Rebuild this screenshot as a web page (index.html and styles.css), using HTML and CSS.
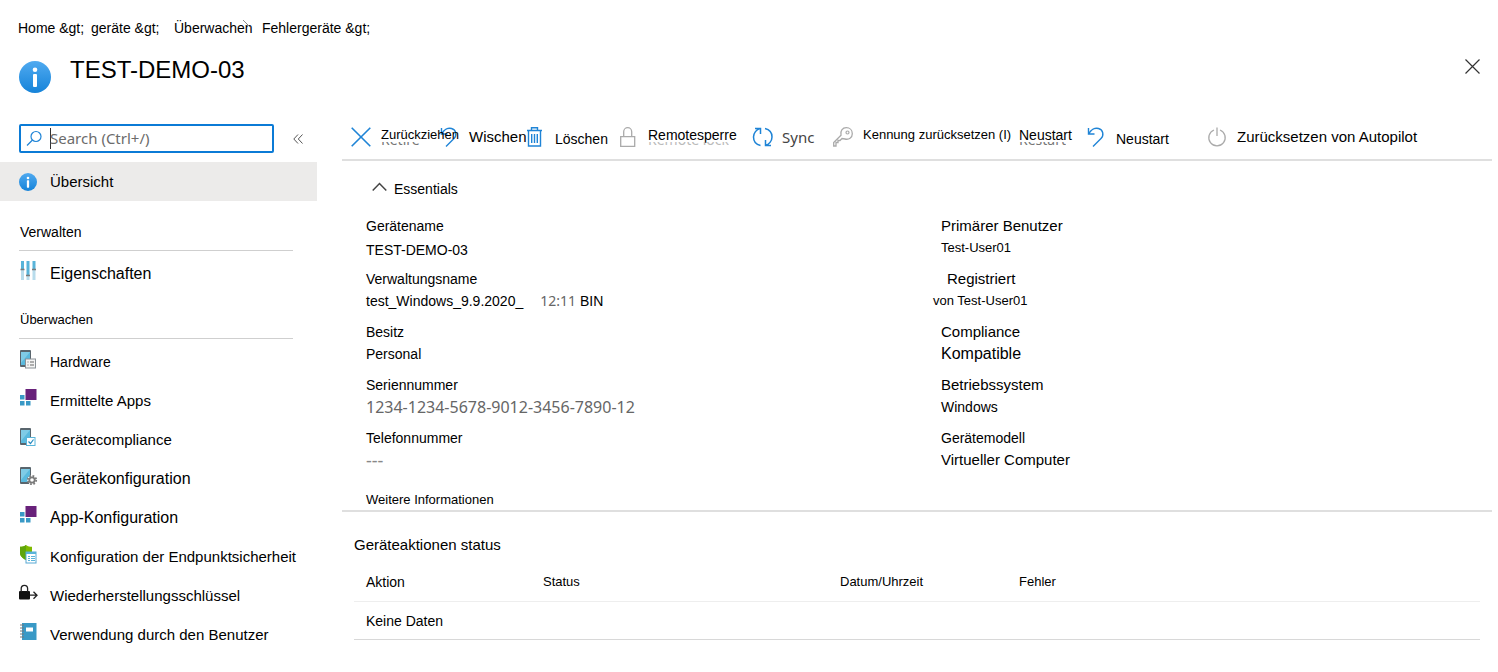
FILE: index.html
```html
<!DOCTYPE html>
<html lang="de">
<head>
<meta charset="utf-8">
<meta name="viewport" content="width=device-width, initial-scale=1">
<title>TEST-DEMO-03</title>
<link rel="stylesheet" href="styles.css">
</head>
<body>
<svg class="defs" width="0" height="0" aria-hidden="true">
  <defs>
    <linearGradient id="blue" x1="0" y1="0" x2="0" y2="1"><stop offset="0" stop-color="#50aaf0"/><stop offset="1" stop-color="#1583d9"/></linearGradient>
    <symbol id="info" viewBox="0 0 32 32"><circle cx="16" cy="16" r="16" fill="url(#blue)"/><circle cx="16" cy="8.800" r="2.300" fill="#fff"/><rect x="14" y="13" width="4" height="13" rx="1" fill="#fff"/></symbol>
    <symbol id="undo" viewBox="0 0 20 20"><path d="M1.500 1v6h6M1.800 6.800C4 2.500 8 .600 11.500 1.500c5 1.300 5.500 7 2.500 10L6 19.500" fill="none" stroke="#1f84d6" stroke-width="1.400"/></symbol>
    <symbol id="phone" viewBox="0 0 18 18"><rect x="1" y="0" width="11" height="17" rx="1" fill="#59656d"/><rect x="2" y="2" width="9" height="13" fill="#5ab9dd"/><path d="M2 2h9L2 13z" fill="#7fcbe6"/></symbol>
    <symbol id="apps" viewBox="0 0 18 18"><rect x="6.500" y="0" width="11" height="11" fill="#68217a"/><rect x="1" y="6" width="4.500" height="4.500" fill="#3999c6"/><rect x="1" y="12" width="4.500" height="4.500" fill="#3999c6"/><rect x="7" y="12" width="4.500" height="4.500" fill="#3999c6"/></symbol>
  </defs>
</svg>

<header class="header">
  <nav class="crumbs" aria-label="Breadcrumb">
    <a href="#">Home &amp;gt;</a>
    <a href="#">geräte &amp;gt;</a>
    <a class="crumb-current" href="#">Überwachen<svg class="crumb-mark" width="8" height="8" viewBox="0 0 8 8"><path d="M0 0l7 7" stroke="#888" fill="none"/></svg></a>
    <a href="#">Fehlergeräte &amp;gt;</a>
  </nav>
  <div class="title-row">
    <svg class="title-icon" width="32" height="32"><use href="#info"/></svg>
    <h1>TEST-DEMO-03</h1>
    <button class="close" type="button" aria-label="Schließen"><svg width="15" height="15" viewBox="0 0 15 15"><path d="M.500 .500l14 14M14.500 .500l-14 14" stroke="#333" stroke-width="1.200"/></svg></button>
  </div>
</header>

<div class="layout">
  <aside class="sidebar">
    <div class="search-row">
      <div class="search">
        <svg width="17" height="17" viewBox="0 0 17 17"><circle cx="10" cy="6.500" r="5" fill="none" stroke="#1f84d6" stroke-width="1.200"/><path d="M6.500 10L1 15.500" stroke="#1f84d6" stroke-width="1.300"/></svg>
        <span class="caret"></span>
        <input type="text" aria-label="Search" placeholder="Search (Ctrl+/)">
      </div>
      <button class="collapse" type="button" aria-label="Menü einklappen"><svg width="10" height="10" viewBox="0 0 10 10"><path d="M5 .500L.800 5 5 9.500M9.500 .500L5.300 5l4.200 4.500" fill="none" stroke="#555"/></svg></button>
    </div>
    <nav>
      <a class="item selected" href="#"><svg width="18" height="18"><use href="#info"/></svg><span>Übersicht</span></a>
      <h2 class="group wide">Verwalten</h2>
      <ul class="items">
        <li><a class="item large" href="#"><svg width="18" height="20" viewBox="0 0 18 20"><path d="M3.500 0v9M9 0v14M15 0v9" stroke="#59b4d9" stroke-width="3"/><path d="M3.500 9v10M9 14v5M15 9v10" stroke="#b8dcec" stroke-width="3"/><path d="M1.500 8.500h4M7 14.500h4M13 8.500h4" stroke="#7a7a7a" stroke-width="1.500"/></svg><span>Eigenschaften</span></a></li>
      </ul>
      <h2 class="group">Überwachen</h2>
      <ul class="items">
        <li><a class="item small" href="#"><svg width="18" height="18" viewBox="0 0 18 18"><use href="#phone"/><rect x="6.500" y="9" width="10" height="9" fill="#f4f4f4" stroke="#8b9297"/><path d="M8.500 12h1M8.500 15h1M11 12h4M11 15h4" stroke="#666"/></svg><span>Hardware</span></a></li>
        <li><a class="item" href="#"><svg width="18" height="18"><use href="#apps"/></svg><span>Ermittelte Apps</span></a></li>
        <li><a class="item" href="#"><svg width="18" height="18" viewBox="0 0 18 18"><use href="#phone"/><rect x="7.500" y="9.500" width="8.500" height="8" fill="#fff" stroke="#59b4d9"/><path d="M9.500 13.500l2 2 3-4" fill="none" stroke="#258bc0" stroke-width="1.200"/></svg><span>Gerätecompliance</span></a></li>
        <li><a class="item large" href="#"><svg width="18" height="18" viewBox="0 0 18 18"><use href="#phone"/><circle cx="13" cy="13" r="4.200" fill="#fff" stroke="#fff"/><circle cx="13" cy="13" r="4.200" fill="none" stroke="#7a7a7a" stroke-width="1.800" stroke-dasharray="1.800 1.500"/><circle cx="13" cy="13" r="2.700" fill="#fff" stroke="#7a7a7a" stroke-width="1.800"/></svg><span>Gerätekonfiguration</span></a></li>
        <li><a class="item large" href="#"><svg width="18" height="18"><use href="#apps"/></svg><span>App-Konfiguration</span></a></li>
        <li><a class="item" href="#"><svg width="18" height="18" viewBox="0 0 18 18"><path d="M7 0c2 1.500 4 1.800 6 1.800V8c0 3-3 5.500-6 7-3-1.500-6-4-6-7V1.800C3 1.800 5 1.500 7 0z" fill="#7fba00"/><path d="M7 0v15c-3-1.500-6-4-6-7V1.800C3 1.800 5 1.500 7 0z" fill="#5fa50b"/><rect x="7" y="7" width="10" height="11" fill="#fff" stroke="#59a9d4"/><path d="M7 8h10" stroke="#59b4d9" stroke-width="2"/><path d="M9 11.500h2M12 11.500h4M9 13.500h2M12 13.500h4M9 15.500h2M12 15.500h4" stroke="#59b4d9"/></svg><span>Konfiguration der Endpunktsicherheit</span></a></li>
        <li><a class="item" href="#"><svg width="19" height="18" viewBox="0 0 19 18"><rect x="0" y="7" width="11" height="8.500" rx="1" fill="#111"/><path d="M2.200 8V4.500a3.200 3.200 0 0 1 6.400 0V8" fill="none" stroke="#222" stroke-width="1.300"/><path d="M11 11.200h7M14.500 7.700L18 11.200l-3.500 3.500" fill="none" stroke="#222" stroke-width="1.300"/></svg><span>Wiederherstellungsschlüssel</span></a></li>
        <li><a class="item" href="#"><svg width="18" height="18" viewBox="0 0 18 18"><rect x="3" y="0" width="14.500" height="17" fill="#3999c6"/><rect x="7" y="4.500" width="7" height="4" fill="#fff"/><path d="M1 2h4M1 5h4M1 8h4M1 11h4M1 14h4" stroke="#777"/></svg><span>Verwendung durch den Benutzer</span></a></li>
      </ul>
    </nav>
  </aside>

  <main class="main">
    <div class="toolbar" role="toolbar" aria-label="Geräteaktionen">
      <button class="tool small raised" type="button"><svg width="20" height="20" viewBox="0 0 20 20"><path d="M.700 .700l18.600 18.600M19.300 .700L.700 19.300" stroke="#1f84d6" stroke-width="1.600"/></svg><span class="label">Zurückziehen<span class="ghost" aria-hidden="true"><span>Retire</span></span></span></button>
      <button class="tool large" type="button"><svg width="20" height="20"><use href="#undo"/></svg><span class="label">Wischen</span></button>
      <button class="tool lowered" type="button"><svg width="20" height="20" viewBox="0 0 20 20"><path d="M1 3.500h15M5.500 3V.700h6V3M2.500 4v15h12V4M5.700 7v9M8.500 7v9M11.300 7v9" fill="none" stroke="#1f84d6" stroke-width="1.400"/></svg><span class="label">Löschen</span></button>
      <button class="tool raised" type="button"><svg width="20" height="20" viewBox="0 0 20 20"><path d="M1.700 9.700h14v9.600h-14zM4.700 9.500V4.700a4 4 0 0 1 8 0v4.800" fill="none" stroke="#aaa" stroke-width="1.300"/></svg><span class="label">Remotesperre<span class="ghost pale" aria-hidden="true"><span>Remote lock</span></span></span></button>
      <button class="tool sync" type="button"><svg width="22" height="20" viewBox="0 0 22 20"><path d="M8.500 18.500C4 17.500 1.500 14 1.500 10S4.500 2.500 8 1.500M3 1.500h5.500V7M13 1.500c4.500 1 7 4.500 7 8.500s-3 7.500-6.500 8.500M19 18.500h-5.500V13" fill="none" stroke="#1f84d6" stroke-width="1.500"/></svg><span class="label">Sync</span></button>
      <button class="tool small raised" type="button"><svg width="20" height="20" viewBox="0 0 20 20"><path d="M9 11.500l-2 2H5v2H3v3.500H.700v-3.500L8 8.200C7 4 9.500 .700 13.300 .700c3.500 0 6 2.500 6 6 0 4-3.500 6.300-7.300 5.300z" fill="none" stroke="#aaa" stroke-width="1.300"/><circle cx="14.500" cy="5.500" r="1.500" fill="none" stroke="#aaa" stroke-width="1.200"/></svg><span class="label">Kennung zurücksetzen (I)</span></button>
      <button class="tool raised" type="button"><span class="label">Neustart<span class="ghost" aria-hidden="true"><span>Restart</span></span></span></button>
      <button class="tool lowered" type="button"><svg width="20" height="20"><use href="#undo"/></svg><span class="label">Neustart</span></button>
      <button class="tool large" type="button"><svg width="20" height="20" viewBox="0 0 20 20"><path d="M6 3A8.200 8.200 0 1 0 12 3M9 .500v8.500" fill="none" stroke="#aaa" stroke-width="1.300"/></svg><span class="label">Zurücksetzen von Autopilot</span></button>
    </div>

    <section class="essentials">
      <button class="toggle" type="button" aria-expanded="true"><svg width="15" height="10" viewBox="0 0 15 10"><path d="M.700 8.500l6.800-7 6.800 7" fill="none" stroke="#444" stroke-width="1.500"/></svg><span>Essentials</span></button>
      <div class="columns">
        <dl class="facts">
          <div class="tall"><dt>Gerätename</dt><dd>TEST-DEMO-03</dd></div>
          <div><dt>Verwaltungsname</dt><dd class="split"><span>test_Windows_9.9.2020_</span><span><span class="muted">12:11</span> BIN</span></dd></div>
          <div><dt>Besitz</dt><dd>Personal</dd></div>
          <div><dt>Seriennummer</dt><dd class="muted serial">1234-1234-5678-9012-3456-7890-12</dd></div>
          <div><dt>Telefonnummer</dt><dd class="muted dashes">---</dd></div>
        </dl>
        <dl class="facts">
          <div><dt class="large">Primärer Benutzer</dt><dd class="small">Test-User01</dd></div>
          <div class="outdent"><dt class="large">Registriert</dt><dd class="small">von Test-User01</dd></div>
          <div><dt class="large">Compliance</dt><dd class="xlarge">Kompatible</dd></div>
          <div><dt class="large">Betriebssystem</dt><dd>Windows</dd></div>
          <div><dt>Gerätemodell</dt><dd class="large">Virtueller Computer</dd></div>
        </dl>
      </div>
      <a class="more" href="#">Weitere Informationen</a>
    </section>

    <section class="actions">
      <h2>Geräteaktionen status</h2>
      <table>
        <colgroup><col class="col-action"><col class="col-status"><col class="col-date"><col></colgroup>
        <thead><tr><th class="first" scope="col">Aktion</th><th scope="col">Status</th><th scope="col">Datum/Uhrzeit</th><th scope="col">Fehler</th></tr></thead>
        <tbody><tr><td colspan="4">Keine Daten</td></tr></tbody>
      </table>
    </section>
  </main>
</div>
</body>
</html>
```

FILE: styles.css
```css
* { box-sizing: border-box; }

body {
  margin: 0;
  background: #fff;
  color: #000;
  font-family: "Liberation Sans", Arial, sans-serif;
  font-size: 14px;
  line-height: 20px;
}

a { color: inherit; text-decoration: none; }

button {
  margin: 0;
  padding: 0;
  border: 0;
  background: none;
  color: inherit;
  font: inherit;
  text-align: left;
  white-space: nowrap;
}

h1, h2, ul, dl, dd { margin: 0; padding: 0; font-weight: normal; }
ul { list-style: none; }
svg { flex: none; display: block; overflow: visible; }
.defs { position: absolute; }

/* Header */
.header { padding: 18px 18px 0; }
.crumbs {
  display: grid;
  grid-template-columns: 73px 83px 88px auto;
  margin-bottom: 16px;
  white-space: nowrap;
}
.crumb-current { position: relative; justify-self: start; }
.crumb-mark { position: absolute; top: 2px; right: 2px; }
.title-row { display: flex; align-items: center; }
.title-icon { margin: 0 19px 0 1px; }
h1 { padding-bottom: 14px; font-size: 24px; line-height: 32px; }
.close { margin-left: auto; padding-bottom: 22px; }

.layout {
  display: grid;
  grid-template-columns: 317px minmax(0, 1fr);
  column-gap: 25px;
}

/* Sidebar */
.search-row {
  display: flex;
  align-items: center;
  gap: 19px;
  padding: 24px 0 9px 19px;
}
.search {
  display: flex;
  align-items: center;
  width: 255px;
  height: 29px;
  padding-left: 5px;
  border: 2px solid #0b7bd6;
  border-radius: 2px;
}
.caret { width: 1px; height: 21px; margin: 0 -1px 0 7px; background: #333; }
.search input {
  flex: 1;
  min-width: 0;
  padding: 0 0 2px;
  border: 0;
  outline: 0;
  background: none;
  color: #333;
  font: 15px/20px "Noto Sans", "Open Sans", sans-serif;
}
.search input::placeholder { color: #6b6b6b; opacity: 1; }
.item {
  display: grid;
  grid-template-columns: 20px auto;
  column-gap: 11px;
  align-items: center;
  height: 39px;
  padding-left: 19px;
  font-size: 15px;
  white-space: nowrap;
}
.item.small { font-size: 14px; }
.item.large { font-size: 16px; }
.items svg { margin-bottom: 5px; }
.selected { margin-bottom: 21px; background: #ecebea; }
.group {
  margin: 0 24px 3px 19px;
  padding: 0 1px 8px;
  border-bottom: 1px solid #cfcfcf;
  font-size: 13px;
}
.group.wide { font-size: 14px; }
.items + .group { margin-top: 17px; }

/* Toolbar */
.main { padding: 14px 6px 0 0; }
.toolbar {
  display: grid;
  grid-template-columns: 89px 86px 93px 133px 81px 186px 68px 121px auto;
  height: 47px;
  padding-left: 9px;
  border-bottom: 2px solid #dfdfdf;
}
.tool { display: flex; align-items: center; gap: 9px; }
.tool.small { gap: 10px; font-size: 13px; }
.tool.large { font-size: 15px; }
.raised .label { margin-bottom: 4px; }
.lowered .label { margin-top: 4px; }
.tool.sync {
  gap: 8px;
  color: #444;
  font-family: "Noto Sans", "Open Sans", sans-serif;
  font-size: 15px;
}
.label { position: relative; }
.ghost {
  position: absolute;
  left: 0;
  top: 17px;
  display: flex;
  align-items: flex-end;
  height: 3px;
  overflow: hidden;
  color: #777;
  font: 14px/10px "Noto Sans", "Open Sans", sans-serif;
}
.ghost.pale { color: #bbb; }

/* Essentials */
.essentials {
  padding: 18px 0 0 24px;
  border-bottom: 2px solid #dfdfdf;
}
.toggle {
  display: flex;
  align-items: center;
  gap: 7px;
  margin-left: 6px;
}
.toggle svg { margin-bottom: 4px; }
.columns {
  display: grid;
  grid-template-columns: minmax(0, 1fr) minmax(0, 551px);
  margin-top: 17px;
}
.facts { display: grid; grid-auto-rows: 53px; }
dd { line-height: 24px; }
.tall dd { line-height: 28px; }
.facts .small { font-size: 13px; }
.facts .large { font-size: 15px; }
.facts .xlarge { font-size: 16px; }
.split { display: flex; gap: 17px; }
.muted { color: #666; font-family: "Noto Sans", "Open Sans", sans-serif; }
.serial { font-size: 16px; }
.dashes { color: #888; font-size: 18px; }
.outdent { margin-left: -8px; }
.outdent dt { padding-left: 14px; }
.more { display: block; margin-top: 9px; font-size: 13px; }

/* Device actions */
.actions { padding: 23px 12px 0; }
.actions h2 { margin-bottom: 8px; font-size: 15px; }
table { width: 100%; border-collapse: collapse; table-layout: fixed; }
th, td {
  height: 38px;
  padding: 0 12px;
  font-weight: normal;
  text-align: left;
}
th { border-bottom: 1px solid #eee; font-size: 13px; }
th.first { font-size: 14px; }
td { padding-top: 2px; border-bottom: 1px solid #d8d8d8; }
.col-action { width: 177px; }
.col-status { width: 297px; }
.col-date { width: 179px; }
```
